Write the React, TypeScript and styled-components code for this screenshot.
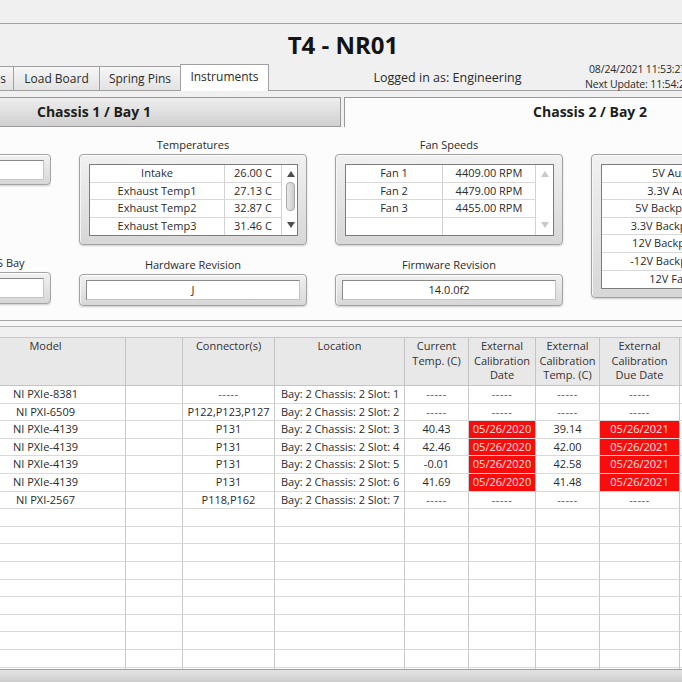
import styled, { createGlobalStyle } from "styled-components"

const GlobalStyle = createGlobalStyle`
  html, body {
    margin: 0;
    padding: 0;
    background: #f0f0f0;
  }
  body {
    font-family: "Open Sans", "Noto Sans", sans-serif;
    color: #2a2a2a;
  }
  * {
    box-sizing: border-box;
  }
`

const Page = styled.div`
  width: 682px;
  height: 682px;
  overflow: hidden;
  display: flex;
  flex-direction: column;
  background: #f0f0f0;
`

const TopStrip = styled.div`
  height: 24px;
  flex-shrink: 0;
  border-bottom: 1px solid #a4a4a4;
`

const Title = styled.h1`
  margin: 0;
  height: 40px;
  flex-shrink: 0;
  font-size: 24px;
  line-height: 41px;
  font-weight: 700;
  text-align: center;
  color: #141414;
  padding-left: 4px;
`

const TabRow = styled.div`
  height: 27px;
  flex-shrink: 0;
  display: flex;
  align-items: flex-end;
  box-shadow: inset 0 -1px 0 #a0a0a0;
`

const Tab = styled.div<{ $active?: boolean; $w: number }>`
  width: ${(p) => p.$w}px;
  height: ${(p) => (p.$active ? 27 : 25)}px;
  margin-right: -1px;
  flex-shrink: 0;
  border: 1px solid #a0a0a0;
  border-bottom: ${(p) => (p.$active ? "none" : "1px solid #a0a0a0")};
  background: ${(p) => (p.$active ? "#ffffff" : "linear-gradient(#f7f7f7, #e2e2e2)")};
  font-size: 12px;
  line-height: ${(p) => (p.$active ? 24 : 23)}px;
  text-align: center;
  white-space: nowrap;
  overflow: hidden;
`

const EdgeTab = styled(Tab)`
  border-left: none;
  text-align: right;
  padding-right: 7px;
`

const LoginBox = styled.div`
  width: 321px;
  flex-shrink: 0;
  align-self: stretch;
  padding-left: 38px;
  font-size: 12.5px;
  line-height: 27px;
  text-align: center;
  white-space: nowrap;
`

const DateBlock = styled.div`
  flex-shrink: 0;
  align-self: center;
  margin-left: -4px;
  font-size: 10.5px;
  letter-spacing: -0.15px;
  line-height: 15px;
  white-space: nowrap;
  padding-bottom: 1px;

  div:first-child {
    padding-left: 4px;
  }
`

const TabGap = styled.div`
  height: 6px;
  flex-shrink: 0;
`

const ChassisRow = styled.div`
  height: 30px;
  flex-shrink: 0;
  display: flex;
  gap: 3px;
`

const ChassisBar = styled.div`
  width: 341px;
  flex-shrink: 0;
  border: 1px solid #9a9a9a;
  border-left: none;
  background: linear-gradient(#eeeeee, #d0d0d0);
  font-size: 14px;
  font-weight: 700;
  line-height: 28px;
  padding-left: 37px;
  color: #1e1e1e;
`

const ChassisTab = styled.div`
  width: 492px;
  flex-shrink: 0;
  border: 1px solid #9a9a9a;
  border-bottom: none;
  background: #fcfcfc;
  font-size: 14px;
  font-weight: 700;
  line-height: 28px;
  text-align: center;
  color: #1e1e1e;
`

const Panel = styled.div`
  height: 193px;
  flex-shrink: 0;
  display: flex;
  gap: 28px;
  padding-top: 10px;
  background: #fcfcfc;
  overflow: hidden;
`

const Column = styled.div<{ $w: number; $clip?: boolean }>`
  width: ${(p) => p.$w}px;
  flex-shrink: 0;
  display: flex;
  flex-direction: column;
  overflow: ${(p) => (p.$clip ? "hidden" : "visible")};
`

const Label = styled.div<{ $top?: number; $left?: boolean }>`
  height: 15px;
  margin-top: ${(p) => p.$top ?? 0}px;
  margin-bottom: 2px;
  font-size: 11px;
  line-height: 15px;
  text-align: ${(p) => (p.$left ? "left" : "center")};
  margin-left: ${(p) => (p.$left ? -3 : 0)}px;
  white-space: nowrap;
`

const Frame = styled.div<{ $w: number; $h: number; $shift?: number }>`
  width: ${(p) => p.$w}px;
  height: ${(p) => p.$h}px;
  flex-shrink: 0;
  margin-left: ${(p) => p.$shift ?? 0}px;
  border: 1px solid #a3a3a3;
  border-radius: 4px;
  background: linear-gradient(#f1f1f1, #d7d7d7);
  box-shadow: inset 0 1px 0 #ffffff, inset 1px 0 0 #f6f6f6, 0 1px 2px rgba(0, 0, 0, 0.2);
`

const ListFrame = styled(Frame)`
  padding: 9px 8px 9px 9px;
`

const ValueFrame = styled(Frame)`
  padding: 5px 6px;
`

const ValueField = styled.div`
  height: 20px;
  border: 1px solid #c4c4c4;
  border-top-color: #8a8a8a;
  border-left-color: #8a8a8a;
  background: #ffffff;
  font-size: 11px;
  line-height: 18px;
  text-align: center;
`

const ListBody = styled.div`
  display: flex;
  border: 1px solid #7c7c7c;
  background: #ffffff;
`

const ListRows = styled.div`
  flex: 1;
  display: flex;
  flex-direction: column;
`

const ListRow = styled.div<{ $cols: string; $last?: boolean }>`
  height: 17.6px;
  display: grid;
  grid-template-columns: ${(p) => p.$cols};
  border-bottom: ${(p) => (p.$last ? "none" : "1px solid #d9d9d9")};
`

const ListCell = styled.div`
  font-size: 11px;
  line-height: 16.6px;
  text-align: center;
  white-space: nowrap;
  overflow: hidden;
  border-right: 1px solid #d2d2d2;
`

const ScrollCol = styled.div`
  width: 17px;
  flex-shrink: 0;
  display: flex;
  flex-direction: column;
  align-items: center;
  padding: 6px 0 7px;
`

const Thumb = styled.div`
  width: 9px;
  height: 29px;
  margin-top: 5px;
  border: 1px solid #a9a9a9;
  border-radius: 4px;
  background: linear-gradient(to right, #e9e9e9, #cdcdcd);
`

const Fill = styled.div`
  flex: 1;
`

const Divider = styled.div`
  height: 7px;
  flex-shrink: 0;
  border-top: 1px solid #a6a6a6;
  border-bottom: 1px solid #b4b4b4;
  background: #f7f7f7;
  margin-bottom: 10px;
`

const Table = styled.div`
  flex: 1;
  min-height: 0;
  margin-left: -34px;
  overflow: hidden;
  display: grid;
  grid-template-columns: 160px 57px 92px 130px 64px 67px 64px 80px 60px;
  grid-template-rows: 48px;
  grid-auto-rows: 17.6px;
  background: #ffffff;
  border-top: 1px solid #c8c8c8;
`

const HeadCell = styled.div`
  background: #e8e8e8;
  border-right: 1px solid #c4c4c4;
  border-bottom: 1px solid #c4c4c4;
  padding-top: 1px;
  font-size: 11px;
  line-height: 14.5px;
  text-align: center;
  white-space: pre-line;
  color: #333333;
`

const Cell = styled.div<{ $alert?: boolean; $left?: boolean; $dash?: boolean }>`
  border-right: 1px solid #c9c9c9;
  border-bottom: 1px solid #d9d9d9;
  background: ${(p) => (p.$alert ? "#f80d0d" : "#ffffff")};
  color: ${(p) => (p.$alert ? "#ffe2e2" : p.$dash ? "#555555" : "#2a2a2a")};
  font-size: 11px;
  line-height: 16.6px;
  text-align: ${(p) => (p.$left ? "left" : "center")};
  padding-left: ${(p) => (p.$left ? 6 : 0)}px;
  letter-spacing: ${(p) => (p.$dash ? "0.6px" : "0")};
  white-space: nowrap;
  overflow: hidden;
`

const BottomBar = styled.div`
  height: 13px;
  flex-shrink: 0;
  border-top: 1px solid #9e9e9e;
  background: linear-gradient(#e3e3e3, #cdcdcd);
`

const Arrow = ({ up, dim }: { up?: boolean; dim?: boolean }) => (
  <svg width="8" height="6" viewBox="0 0 8 6">
    <path d={up ? "M4 0L8 6H0Z" : "M0 0H8L4 6Z"} fill={dim ? "#c9c9c9" : "#4e4e4e"} />
  </svg>
)

type Pair = [string, string]

const ListBox = ({ rows, cols, scroll }: { rows: Pair[]; cols: string; scroll?: "active" | "dim" }) => (
  <ListBody>
    <ListRows>
      {rows.map((r, i) => (
        <ListRow key={i} $cols={cols} $last={i === rows.length - 1}>
          <ListCell>{r[0]}</ListCell>
          <ListCell>{r[1]}</ListCell>
        </ListRow>
      ))}
    </ListRows>
    {scroll && (
      <ScrollCol>
        <Arrow up dim={scroll === "dim"} />
        {scroll === "active" && <Thumb />}
        <Fill />
        <Arrow dim={scroll === "dim"} />
      </ScrollCol>
    )}
  </ListBody>
)

const tempRows: Pair[] = [
  ["Intake", "26.00 C"],
  ["Exhaust Temp1", "27.13 C"],
  ["Exhaust Temp2", "32.87 C"],
  ["Exhaust Temp3", "31.46 C"],
]

const fanRows: Pair[] = [
  ["Fan 1", "4409.00 RPM"],
  ["Fan 2", "4479.00 RPM"],
  ["Fan 3", "4455.00 RPM"],
  ["", ""],
]

const voltRows: Pair[] = [
  ["5V Aux", ""],
  ["3.3V Aux", ""],
  ["5V Backplane", ""],
  ["3.3V Backplane", ""],
  ["12V Backplane", ""],
  ["-12V Backplane", ""],
  ["12V Fan", ""],
]

const headers = [
  "Model",
  "",
  "Connector(s)",
  "Location",
  "Current\nTemp. (C)",
  "External\nCalibration\nDate",
  "External\nCalibration\nTemp. (C)",
  "External\nCalibration\nDue Date",
  "",
]

const DASH = "-----"

type Instrument = {
  model: string
  conn: string
  temp: string
  calDate: string
  calTemp: string
  due: string
  expired?: boolean
}

const instruments: Instrument[] = [
  { model: "NI PXIe-8381", conn: DASH, temp: DASH, calDate: DASH, calTemp: DASH, due: DASH },
  { model: "NI PXI-6509", conn: "P122,P123,P127", temp: DASH, calDate: DASH, calTemp: DASH, due: DASH },
  { model: "NI PXIe-4139", conn: "P131", temp: "40.43", calDate: "05/26/2020", calTemp: "39.14", due: "05/26/2021", expired: true },
  { model: "NI PXIe-4139", conn: "P131", temp: "42.46", calDate: "05/26/2020", calTemp: "42.00", due: "05/26/2021", expired: true },
  { model: "NI PXIe-4139", conn: "P131", temp: "-0.01", calDate: "05/26/2020", calTemp: "42.58", due: "05/26/2021", expired: true },
  { model: "NI PXIe-4139", conn: "P131", temp: "41.69", calDate: "05/26/2020", calTemp: "41.48", due: "05/26/2021", expired: true },
  { model: "NI PXI-2567", conn: "P118,P162", temp: DASH, calDate: DASH, calTemp: DASH, due: DASH },
]

const EMPTY_ROWS = 10

const Row = ({ r, slot }: { r: Instrument; slot: number }) => (
  <>
    <Cell>{r.model}</Cell>
    <Cell />
    <Cell $dash={r.conn === DASH}>{r.conn}</Cell>
    <Cell $left>Bay: 2 Chassis: 2 Slot: {slot}</Cell>
    <Cell $dash={r.temp === DASH}>{r.temp}</Cell>
    <Cell $alert={r.expired} $dash={r.calDate === DASH}>
      {r.calDate}
    </Cell>
    <Cell $dash={r.calTemp === DASH}>{r.calTemp}</Cell>
    <Cell $alert={r.expired} $dash={r.due === DASH}>
      {r.due}
    </Cell>
    <Cell />
  </>
)

export default function App() {
  return (
    <Page>
      <GlobalStyle />
      <TopStrip />
      <Title>T4 - NR01</Title>
      <TabRow>
        <EdgeTab $w={14}>s</EdgeTab>
        <Tab $w={87}>Load Board</Tab>
        <Tab $w={82}>Spring Pins</Tab>
        <Tab $w={89} $active>
          Instruments
        </Tab>
        <LoginBox>Logged in as: Engineering</LoginBox>
        <DateBlock>
          <div>08/24/2021 11:53:27 AM</div>
          <div>Next Update: 11:54:27 AM</div>
        </DateBlock>
      </TabRow>
      <TabGap />
      <ChassisRow>
        <ChassisBar>Chassis 1 / Bay 1</ChassisBar>
        <ChassisTab>Chassis 2 / Bay 2</ChassisTab>
      </ChassisRow>

      <Panel>
        <Column $w={51} $clip>
          <Label />
          <ValueFrame $w={228} $h={31} $shift={-177}>
            <ValueField />
          </ValueFrame>
          <Label $top={70} $left>
            S Bay
          </Label>
          <ValueFrame $w={228} $h={32} $shift={-177}>
            <ValueField />
          </ValueFrame>
        </Column>

        <Column $w={228}>
          <Label>Temperatures</Label>
          <ListFrame $w={228} $h={91}>
            <ListBox rows={tempRows} cols="135px 57px" scroll="active" />
          </ListFrame>
          <Label $top={12}>Hardware Revision</Label>
          <ValueFrame $w={228} $h={32}>
            <ValueField>J</ValueField>
          </ValueFrame>
        </Column>

        <Column $w={228}>
          <Label>Fan Speeds</Label>
          <ListFrame $w={228} $h={91}>
            <ListBox rows={fanRows} cols="97px 93px" scroll="dim" />
          </ListFrame>
          <Label $top={12}>Firmware Revision</Label>
          <ValueFrame $w={228} $h={32}>
            <ValueField>14.0.0f2</ValueField>
          </ValueFrame>
        </Column>

        <Column $w={270}>
          <Label />
          <ListFrame $w={270} $h={144}>
            <ListBox rows={voltRows} cols="136px 1fr" />
          </ListFrame>
        </Column>
      </Panel>

      <Divider />

      <Table>
        {headers.map((h, i) => (
          <HeadCell key={i}>{h}</HeadCell>
        ))}
        {instruments.map((r, i) => (
          <Row key={i} r={r} slot={i + 1} />
        ))}
        {Array.from({ length: EMPTY_ROWS * 9 }).map((_, i) => (
          <Cell key={`e${i}`} />
        ))}
      </Table>
      <BottomBar />
    </Page>
  )
}
